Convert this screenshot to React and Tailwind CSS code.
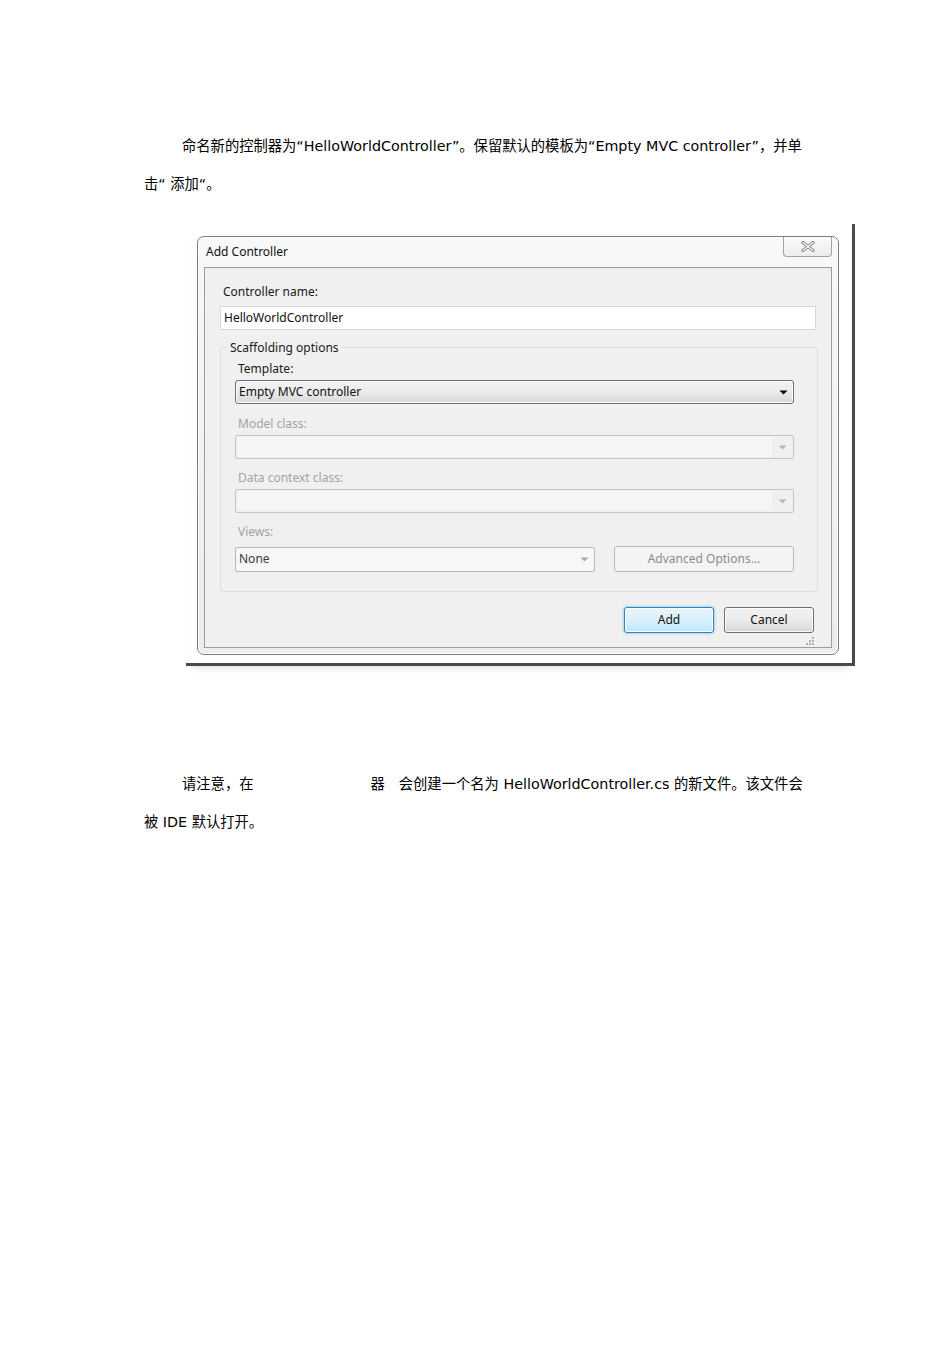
import React from 'react';

const bodyFont = { fontFamily: '"DejaVu Sans", "Noto Sans CJK SC", sans-serif' };
const uiFont = { fontFamily: '"Noto Sans", "Open Sans", sans-serif' };

const Arrow = ({ color = '#000' }) => (
  <svg width="9" height="5" viewBox="0 0 9 5">
    <path d="M0.5 0.5 H8.5 L4.5 4.5 Z" fill={color} />
  </svg>
);

const DisabledCombo = () => (
  <div className="flex h-[24px] w-[559px] rounded-[2px] border border-[#c3c6c8] bg-[#f0f0f0] p-[1px]">
    <div className="flex-1 bg-[#f5f5f5]" />
    <div className="flex w-[20px] items-center justify-center">
      <Arrow color="#b5b5b5" />
    </div>
  </div>
);

const Label = ({ children, disabled }) => (
  <div className={`h-[20px] text-[12px] leading-[20px] ${disabled ? 'text-[#a3a3a3]' : 'text-[#1a1a1a]'}`}>
    {children}
  </div>
);

const AddControllerDialog = () => (
  <div className="h-[419px] w-[642px] rounded-[7px] border border-[#7d7d7d] bg-gradient-to-b from-[#f8f8f8] to-[#ececec] shadow-[inset_0_0_0_1px_#ffffff]">
    {/* title bar */}
    <div className="flex h-[30px] items-start">
      <div className="pl-[8px] pt-[6px] text-[12px] leading-[17px] text-[#111]" style={uiFont}>
        Add Controller
      </div>
      <div className="ml-auto mr-[6px] flex h-[20px] w-[49px] items-center justify-center rounded-b-[4px] border border-t-0 border-[#a3a3a3] bg-gradient-to-b from-[#fbfbfb] to-[#ececec]">
        <svg width="14" height="11" viewBox="0 0 14 11">
          <path d="M2 1.5 L12 9.5 M12 1.5 L2 9.5" stroke="#8c8c8c" strokeWidth="3.4" strokeLinecap="round" />
          <path d="M2 1.5 L12 9.5 M12 1.5 L2 9.5" stroke="#f4f4f4" strokeWidth="1.4" strokeLinecap="round" />
        </svg>
      </div>
    </div>

    {/* client area */}
    <div className="mx-[6px] h-[381px] border border-[#9d9d9d] bg-[#f0f0f0]" style={uiFont}>
      <div className="pl-[15px] pr-[16px] pt-[14px]">
        <div className="pl-[3px]">
          <Label>Controller name:</Label>
        </div>
        <div className="mt-[4px] flex h-[24px] w-[596px] items-center border border-[#d9d9d9] bg-white pl-[3px] text-[12px] text-[#111]">
          HelloWorldController
        </div>

        {/* group box */}
        <div className="relative mt-[17px] h-[245px] w-[598px] rounded-[3px] border border-[#dcdfe2] px-[14px] pt-[11px]">
          <div className="absolute -top-[10px] left-[6px] bg-[#f0f0f0] px-[3px] text-[12px] leading-[20px] text-[#1a1a1a]">
            Scaffolding options
          </div>
          <div className="pl-[3px]">
            <Label>Template:</Label>
          </div>
          <div className="mt-[1px] flex h-[24px] w-[559px] items-center rounded-[3px] border border-[#707070] bg-gradient-to-b from-[#f3f3f3] via-[#ebebeb] to-[#d9d9d9] shadow-[inset_0_0_0_1px_#fbfbfb]">
            <span className="flex-1 pl-[3px] text-[12px] text-[#111]">Empty MVC controller</span>
            <span className="flex w-[20px] justify-center">
              <Arrow />
            </span>
          </div>

          <div className="mt-[10px] pl-[3px]">
            <Label disabled>Model class:</Label>
          </div>
          <div className="mt-[1px]">
            <DisabledCombo />
          </div>

          <div className="mt-[9px] pl-[3px]">
            <Label disabled>Data context class:</Label>
          </div>
          <div className="mt-[1px]">
            <DisabledCombo />
          </div>

          <div className="mt-[9px] pl-[3px]">
            <Label disabled>Views:</Label>
          </div>
          <div className="mt-[4px] flex items-center gap-[19px]">
            <div className="flex h-[25px] w-[360px] items-center rounded-[2px] border border-[#b5b8ba] bg-[#f7f7f7]">
              <span className="flex-1 pl-[3px] text-[12px] text-[#3a3a3a]">None</span>
              <span className="flex w-[20px] justify-center">
                <Arrow color="#a9a9a9" />
              </span>
            </div>
            <div className="flex h-[26px] w-[180px] items-center justify-center rounded-[3px] border border-[#b7babc] bg-[#f4f4f4] text-[12px] text-[#8b8b8b]">
              Advanced Options...
            </div>
          </div>
        </div>

        {/* buttons */}
        <div className="mt-[15px] flex justify-end gap-[10px] pr-[1px]">
          <div className="flex h-[26px] w-[90px] items-center justify-center rounded-[3px] border border-[#3c7fb1] bg-gradient-to-b from-[#e8f6fd] via-[#d9f0fc] to-[#bee6fd] text-[12px] text-[#111] shadow-[0_0_2px_1px_#9fd9f5,inset_0_0_0_1px_#ffffff]">
            Add
          </div>
          <div className="flex h-[26px] w-[90px] items-center justify-center rounded-[3px] border border-[#707070] bg-gradient-to-b from-[#f2f2f2] via-[#ebebeb] to-[#d5d5d5] text-[12px] text-[#111] shadow-[inset_0_0_0_1px_#fcfcfc]">
            Cancel
          </div>
        </div>
        <div className="flex justify-end pt-[3px]">
          <svg width="10" height="10" viewBox="0 0 10 10">
            <g fill="#b0b0b0">
              <rect x="7" y="1" width="2" height="2" />
              <rect x="4" y="4" width="2" height="2" />
              <rect x="7" y="4" width="2" height="2" />
              <rect x="1" y="7" width="2" height="2" />
              <rect x="4" y="7" width="2" height="2" />
              <rect x="7" y="7" width="2" height="2" />
            </g>
          </svg>
        </div>
      </div>
    </div>
  </div>
);

const App = () => {
  return (
    <div className="min-h-[1345px] w-[950px] bg-white text-black" style={bodyFont}>
      <div className="pl-[144px] pt-[127px]">
        <div className="text-[14.3px] leading-[38px]">
          <div className="whitespace-nowrap pl-[38px]">
            命名新的控制器为“HelloWorldController”。保留默认的模板为“Empty MVC controller”，并单
          </div>
          <div className="whitespace-nowrap">击“ 添加“。</div>
        </div>

        {/* screenshot of the dialog */}
        <div className="ml-[42px] mt-[21px] w-[669px] border-b-[3px] border-r-[3px] border-b-[#4a4a4a] border-r-[#4a4a4a] pb-[8px] pl-[11px] pt-[12px] shadow-[0_6px_8px_-6px_#cfcfcf]">
          <AddControllerDialog />
        </div>

        <div className="mt-[99px] text-[14.3px] leading-[38px]">
          <div className="whitespace-nowrap pl-[38px]">
            请注意，在<span className="inline-block w-[117px]" />器<span className="inline-block w-[14px]" />会创建一个名为 HelloWorldController.cs 的新文件。该文件会
          </div>
          <div className="whitespace-nowrap">被 IDE 默认打开。</div>
        </div>
      </div>
    </div>
  );
};

export default App;
